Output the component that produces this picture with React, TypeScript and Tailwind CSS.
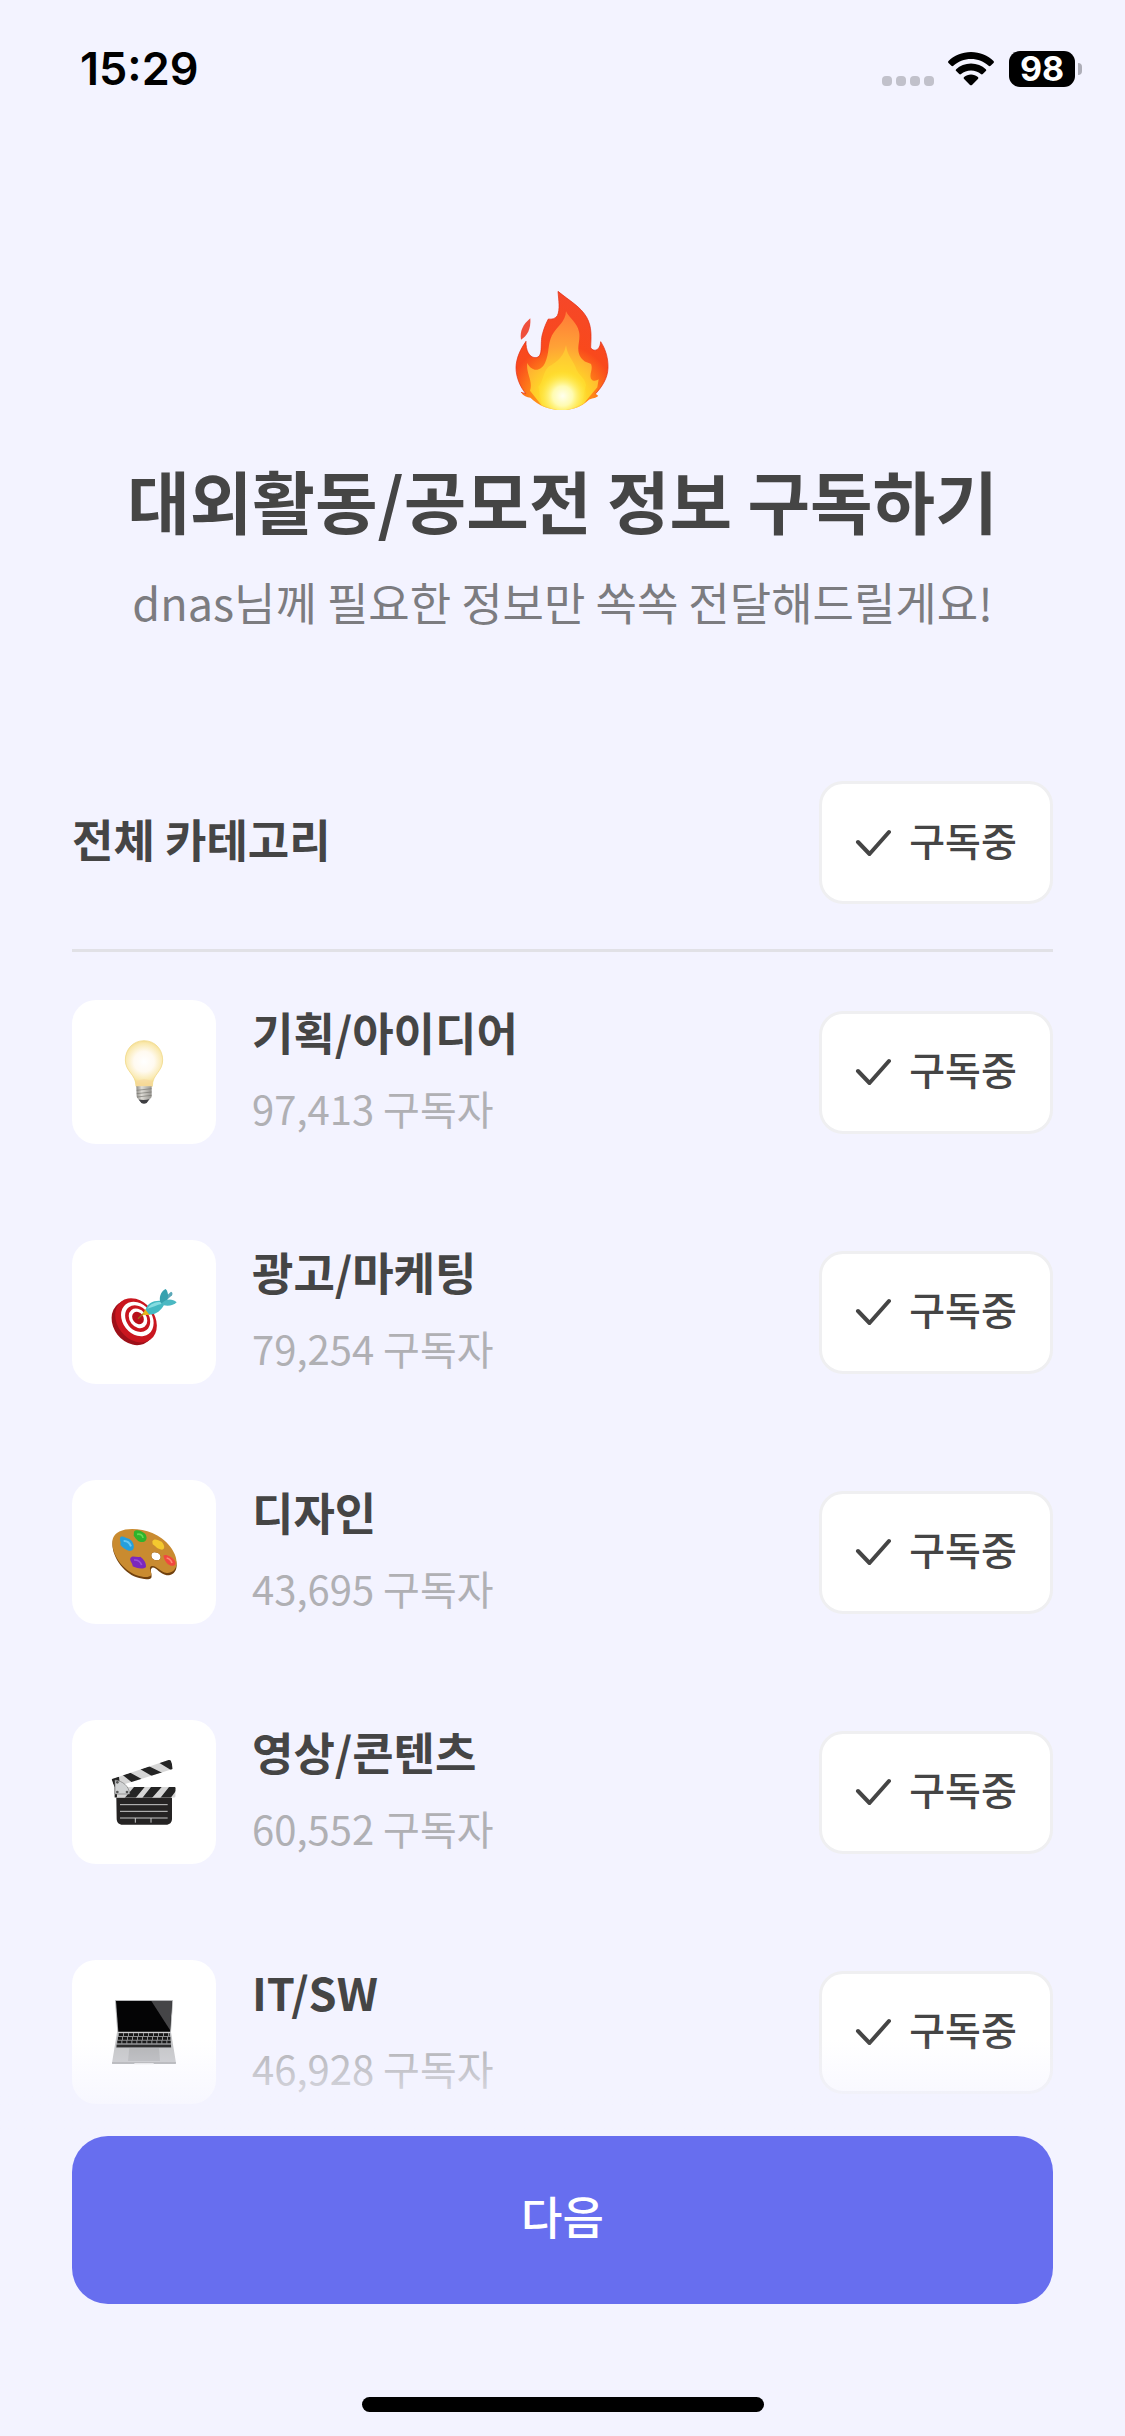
import React from 'react';

const FlameIcon = () => (
  <svg viewBox="99 54 300 378" className="w-[100px] h-[126px]" aria-hidden="true">
    <defs>
      <radialGradient id="flame-outer" gradientUnits="userSpaceOnUse" cx="245" cy="385" r="320">
        <stop offset="0" stopColor="#ffb020" />
        <stop offset="0.3" stopColor="#ff8418" />
        <stop offset="0.5" stopColor="#f9491c" />
        <stop offset="1" stopColor="#f5472a" />
      </radialGradient>
      <radialGradient id="flame-inner" gradientUnits="userSpaceOnUse" cx="248" cy="385" r="260">
        <stop offset="0" stopColor="#fff04a" />
        <stop offset="0.3" stopColor="#ffd328" />
        <stop offset="0.6" stopColor="#ffa236" />
        <stop offset="1" stopColor="#ff7a38" />
      </radialGradient>
      <radialGradient id="flame-core" gradientUnits="userSpaceOnUse" cx="248" cy="378" r="75">
        <stop offset="0" stopColor="#ffffee" />
        <stop offset="0.4" stopColor="#fffbb0" />
        <stop offset="1" stopColor="#ffe93a" stopOpacity="0" />
      </radialGradient>
      <clipPath id="flame-clip">
        <path d="M234 64C268 92 302 110 320 142C337 172 333 204 332 232C338 246 360 245 362 215C377 238 385 266 384 294C383 325 366 350 347 371L355 378C345 386 334 385 327 389C304 411 276 420 246 420C209 420 175 407 151 383C141 383 130 378 123 367L137 371C121 350 108 323 108 292C109 264 121 238 138 214C137 240 147 262 165 263C193 263 178 222 188 190C193 172 199 158 205 147C216 149 226 146 232 137C241 119 236 91 234 64Z" />
      </clipPath>
    </defs>
    <path d="M151 145C128 164 119 184 123 209C142 198 153 178 151 145Z" fill="#ef4f3c" />
    <g clipPath="url(#flame-clip)">
      <rect x="96" y="54" width="300" height="378" fill="url(#flame-outer)" />
      <path d="M258 124C268 145 291 157 297 185C303 211 286 238 302 262C310 276 326 279 333 282C340 299 327 312 333 326C340 336 350 332 356 328L352 352L310 402L246 425L184 405L150 362C160 333 137 310 142 279C156 308 183 304 195 279C209 250 202 224 216 196C232 168 257 155 258 124Z" fill="url(#flame-inner)" />
      <path d="M258 225C262 260 282 272 290 300C300 318 314 324 318 345L300 425L190 425L175 350C190 335 187 310 205 290C235 275 253 255 258 225Z" fill="#ffe536" opacity="0.45" />
      <ellipse cx="248" cy="378" rx="72" ry="75" fill="url(#flame-core)" />
    </g>
    <path d="M234 64C268 92 302 110 320 142C337 172 333 204 332 232C338 246 360 245 362 215C377 238 385 266 384 294C383 325 366 350 347 371M123 367L137 371C121 350 108 323 108 292C109 264 121 238 138 214C137 240 147 262 165 263C193 263 178 222 188 190C193 172 199 158 205 147C216 149 226 146 232 137C241 119 236 91 234 64" fill="none" stroke="#e22d14" strokeWidth="3" opacity="0.7" />
  </svg>
);

const BulbIcon = () => (
  <svg viewBox="6 0 432 432" className="size-full" aria-hidden="true">
    <defs>
      <radialGradient id="bulb-glass" gradientUnits="userSpaceOnUse" cx="222" cy="185" r="68">
        <stop offset="0" stopColor="#ffffff" />
        <stop offset="0.45" stopColor="#fffaf0" />
        <stop offset="0.8" stopColor="#faeab2" />
        <stop offset="1" stopColor="#f3d984" />
      </radialGradient>
      <linearGradient id="bulb-base" x1="0" x2="1">
        <stop offset="0" stopColor="#8f8d88" />
        <stop offset="0.35" stopColor="#dedcd6" />
        <stop offset="1" stopColor="#96948f" />
      </linearGradient>
    </defs>
    <path d="M222 122C254 122 278 147 278 180C278 216 247 222 247 259H198C198 222 166 216 166 180C166 147 190 122 222 122Z" fill="url(#bulb-glass)" stroke="#efd47c" strokeWidth="2" />
    <path d="M199 244Q222 232 246 244V259H198Z" fill="#f7d8a0" opacity="0.7" />
    <path d="M199 259H245V288C245 296 236 300 222 301C208 300 200 296 200 288Z" fill="url(#bulb-base)" />
    <path d="M200 271L245 266M200 281L245 276M201 291L245 286" stroke="#77756f" strokeWidth="2" />
    <path d="M205 298Q222 303 239 297L230 309Q222 313 214 309Z" fill="#3f3f42" />
  </svg>
);

const TargetIcon = () => (
  <svg viewBox="6 0 432 432" className="size-full" aria-hidden="true">
    <ellipse cx="189" cy="248" rx="59" ry="72" transform="rotate(-38 189 248)" fill="#9d1019" />
    <ellipse cx="198" cy="241" rx="56" ry="72" transform="rotate(-38 198 241)" fill="#c9161f" />
    <ellipse cx="202" cy="237" rx="44" ry="56" transform="rotate(-38 202 237)" fill="#fff" />
    <ellipse cx="203" cy="236" rx="34" ry="43" transform="rotate(-38 203 236)" fill="#c9161f" />
    <ellipse cx="204" cy="235" rx="25" ry="32" transform="rotate(-38 204 235)" fill="#fff" />
    <ellipse cx="204" cy="234" rx="16" ry="20" transform="rotate(-38 204 234)" fill="#b80f19" />
    <path d="M204 236L223 218" stroke="#9c6d16" strokeWidth="4" />
    <path d="M217 226L226 207L242 224Z" fill="#e8b51b" />
    <path d="M273 182L303 155Q310 158 306 166L280 190Z" fill="#5aa8b8" />
    <path d="M227 209C232 190 252 180 275 183L282 195C272 212 256 226 237 223Z" fill="#44b9c2" />
    <path d="M232 206C241 191 256 186 271 186L277 191C260 194 247 202 232 206Z" fill="#85dce0" />
    <path d="M270 184C267 166 276 152 287 147C296 157 296 173 289 185L276 193Z" fill="#36a1ae" />
    <path d="M275 190C287 177 305 173 320 187C312 197 294 199 281 196Z" fill="#4bb8c2" />
  </svg>
);

const PaletteIcon = () => (
  <svg viewBox="6 0 432 432" className="size-full" aria-hidden="true">
    <path
      fillRule="evenodd"
      d="M128 183C136 146 199 146 247 168C288 185 321 221 320 257C319 277 306 287 290 286C269 282 258 261 247 263C237 267 248 284 244 293C239 300 218 298 200 292C158 277 122 225 128 183ZM244 226C243 240 263 246 271 236C276 225 263 216 253 217C247 218 244 221 244 226Z"
      fill="#70410e"
    />
    <path
      fillRule="evenodd"
      d="M128 178C136 142 199 139 247 159C288 176 321 216 320 250C319 270 306 280 290 279C269 275 259 255 245 258C232 263 248 278 243 286C237 294 218 292 200 286C158 271 121 221 128 178ZM244 226C243 240 263 246 271 236C276 225 263 216 253 217C247 218 244 221 244 226Z"
      fill="#c98b30"
    />
    <path d="M150 174C154 164 166 173 178 177C190 184 196 202 188 210C178 218 157 203 151 194C154 187 148 181 150 174Z" fill="#269fdc" />
    <path d="M161 183Q177 182 183 199" fill="none" stroke="#69c8f3" strokeWidth="6" />
    <path d="M192 155C199 145 218 154 226 162C235 177 227 188 212 186C199 182 196 172 191 168Z" fill="#2fb32c" />
    <path d="M201 163Q217 160 219 174" fill="none" stroke="#66da52" strokeWidth="5" />
    <path d="M247 184C252 174 264 180 275 185C284 194 286 207 276 209C261 208 257 198 248 193Z" fill="#f4c92f" />
    <path d="M280 227C286 220 305 230 312 239C322 250 315 260 303 257C290 252 284 242 280 227Z" fill="#f1483f" />
    <path d="M290 234Q302 237 306 249" fill="none" stroke="#ff8a76" strokeWidth="5" />
    <path d="M181 235C186 224 197 233 211 230C221 238 229 247 228 261C218 270 197 263 188 259C188 249 178 243 181 235Z" fill="#7b28bd" />
    <path d="M192 240Q209 239 215 255" fill="none" stroke="#9c52d6" strokeWidth="5" />
  </svg>
);

const ClapperIcon = () => (
  <svg viewBox="6 0 432 432" className="size-full" aria-hidden="true">
    <defs>
      <clipPath id="clap-arm">
        <path d="M124 178L296 120Q304 119 305 127L308 147L134 202Z" />
      </clipPath>
      <clipPath id="clap-bar">
        <path d="M133 201H314Q317 201 317 205V228Q317 233 312 233H133Z" />
      </clipPath>
    </defs>
    <g clipPath="url(#clap-arm)">
      <rect x="120" y="110" width="200" height="100" fill="#d6d6d6" />
      <path d="M124 173L147 170L150 200L132 202ZM158 165L181 158L219 179L187 188ZM211 148L237 139L278 159L247 169ZM267 128L300 116L312 146L304 151Z" fill="#242424" />
    </g>
    <g clipPath="url(#clap-bar)">
      <rect x="130" y="200" width="190" height="35" fill="#d6d6d6" />
      <path d="M133 201H141V233H133ZM192 201H224L196 235H163ZM243 201H275L245 235H216ZM297 201H318V212L301 235H270Z" fill="#242424" />
    </g>
    <path d="M135 180C157 183 177 197 179 222H135Z" fill="#d1d3d4" stroke="#777" strokeWidth="2" />
    <circle cx="142" cy="187" r="4" fill="#555" />
    <circle cx="142" cy="216" r="4" fill="#555" />
    <circle cx="171" cy="216" r="4" fill="#555" />
    <path d="M139 233H306V296C306 307 299 314 288 314H158C147 314 140 307 140 296Z" fill="#252323" />
    <path d="M150 254H293M150 274H293M150 294H293M196 294V308M243 294V308" stroke="#c8c8c8" strokeWidth="3" />
  </svg>
);

const LaptopIcon = () => (
  <svg viewBox="6 0 432 432" className="size-full" aria-hidden="true">
    <path d="M137 120H307Q309 120 309 123L303 217H142L135 123Q135 120 137 120Z" fill="#b5b6b8" />
    <path d="M138 123H306L300 215H145Z" fill="#040405" />
    <path d="M244 123H306L300 210Z" fill="#454547" />
    <path d="M141 217H303L318 309Q318 312 314 312H129Q125 312 126 309Z" fill="#c3c4c6" />
    <path d="M145 219H300L304 263H138Z" fill="#8d8e90" />
    <path d="M147 224H299M144 235H301M142 246H302" stroke="#161616" strokeWidth="8" strokeDasharray="12 3" />
    <path d="M140 258H303" stroke="#202020" strokeWidth="8" />
    <path d="M178 265H267L270 303H174Z" fill="#b1b2b4" />
    <path d="M126 309H318" stroke="#929395" strokeWidth="3" />
    <path d="M193 311H251" stroke="#e4e4e6" strokeWidth="4" />
  </svg>
);

const WifiIcon = () => (
  <svg viewBox="0 0 46 34" className="w-[46px] h-[34px]" aria-hidden="true">
    <path d="M23 0C32 0 40 3.500 45.500 9C46.100 9.600 46.100 10.300 45.500 10.900L42.600 13.800C42 14.400 41.200 14.400 40.600 13.800C36 9.400 29.800 7 23 7S10 9.400 5.400 13.800C4.800 14.400 4 14.400 3.400 13.800L.5 10.900C-.1 10.300-.1 9.600.5 9C6 3.500 14 0 23 0Z" />
    <path d="M23 11.500C28.800 11.500 34 13.700 37.800 17.200C38.400 17.800 38.400 18.500 37.800 19.100L34.800 22C34.200 22.600 33.500 22.600 32.900 22C30.200 19.700 26.800 18.400 23 18.400S15.800 19.700 13.100 22C12.500 22.600 11.800 22.600 11.200 22L8.200 19.100C7.600 18.500 7.600 17.800 8.200 17.200C12 13.700 17.200 11.500 23 11.500Z" />
    <path d="M23 22.600C25.600 22.600 28 23.500 29.900 25C30.500 25.600 30.500 26.300 29.900 26.900L24 32.900C23.400 33.500 22.600 33.500 22 32.900L16.100 26.900C15.500 26.300 15.500 25.600 16.100 25C18 23.500 20.400 22.600 23 22.600Z" />
  </svg>
);

const StatusBar = () => (
  <div className="flex justify-between items-center h-[138px] pl-20 pr-[43px] font-['Inter',sans-serif] text-black">
    <span className="text-[45px] leading-[54px] font-semibold">15:29</span>
    <div className="flex items-center">
      <div className="flex gap-1 pt-6 mr-[14px]">
        <span className="w-[10px] h-[10px] rounded-[4px] bg-[#c1c1cb]" />
        <span className="w-[10px] h-[10px] rounded-[4px] bg-[#c1c1cb]" />
        <span className="w-[10px] h-[10px] rounded-[4px] bg-[#c1c1cb]" />
        <span className="w-[10px] h-[10px] rounded-[4px] bg-[#c1c1cb]" />
      </div>
      <WifiIcon />
      <span className="flex justify-center items-center w-[66px] h-9 ml-[15px] rounded-[11px] bg-black text-white text-[34px] leading-9 font-bold">
        98
      </span>
      <span className="w-1 h-3 ml-[3px] rounded-r-full bg-[#aeaeb8]" />
    </div>
  </div>
);

const SubscribeButton = ({ label }: { label: string }) => (
  <button
    type="button"
    aria-label={`${label} 구독중`}
    className="flex justify-center items-center gap-[18px] flex-shrink-0 w-[234px] h-[123px] rounded-3xl border-[3px] border-[#efeff1] bg-white text-[39px] leading-[54px] font-medium"
  >
    <svg viewBox="0 0 36 28" className="w-9 h-7" fill="none" stroke="currentColor" strokeWidth="4" strokeLinecap="round" strokeLinejoin="round" aria-hidden="true">
      <path d="M3 13L14.500 25L34 3" />
    </svg>
    <span className="pb-2">구독중</span>
  </button>
);

const categories = [
  { name: '기획/아이디어', count: '97,413', Icon: BulbIcon },
  { name: '광고/마케팅', count: '79,254', Icon: TargetIcon },
  { name: '디자인', count: '43,695', Icon: PaletteIcon },
  { name: '영상/콘텐츠', count: '60,552', Icon: ClapperIcon },
  { name: 'IT/SW', count: '46,928', Icon: LaptopIcon },
];

export default function App() {
  return (
    <div className="flex flex-col min-h-screen bg-[#f3f3ff] text-[#454545] font-['Noto_Sans_CJK_KR',sans-serif]">
      <StatusBar />

      <header className="flex flex-col items-center pt-[150px] text-center">
        <FlameIcon />
        <h1 className="mt-[38px] text-[68px] leading-[96px] font-bold">대외활동/공모전 정보 구독하기</h1>
        <p className="mt-6 text-[45px] leading-[60px] font-normal text-[#7c7c80]">
          dnas님께 필요한 정보만 쏙쏙 전달해드릴게요!
        </p>
      </header>

      <main className="flex-1 px-18 pt-[149px] pb-8">
        <div className="flex justify-between items-center pb-[45px] border-b-[3px] border-[#e1e1e6]">
          <h2 className="pb-2 text-[45px] leading-[60px] font-bold">전체 카테고리</h2>
          <SubscribeButton label="전체 카테고리" />
        </div>

        <ul className="flex flex-col gap-24 pt-12">
          {categories.map(({ name, count, Icon }) => (
            <li key={name} className="flex items-center gap-9">
              <div className="size-36 flex-shrink-0 rounded-3xl bg-white">
                <Icon />
              </div>
              <div className="flex-1 pb-1">
                <h3 className="text-[45px] leading-[60px] font-bold">{name}</h3>
                <p className="mt-4 text-[40px] leading-[60px] font-normal text-[#b0b0b4]">{count} 구독자</p>
              </div>
              <SubscribeButton label={name} />
            </li>
          ))}
        </ul>
      </main>

      <footer className="sticky bottom-0 px-18 pb-6 bg-[#f3f3ff]">
        <div className="absolute inset-x-0 bottom-full h-24 pointer-events-none bg-linear-to-b from-[#f3f3ff]/0 to-[#f3f3ff]" />
        <button type="button" className="w-full h-[168px] pb-2 rounded-[36px] bg-[#676eef] text-white text-[45px] leading-[60px] font-medium">
          다음
        </button>
        <div className="w-[402px] h-[15px] mt-[93px] mx-auto rounded-full bg-black" />
      </footer>
    </div>
  );
}
